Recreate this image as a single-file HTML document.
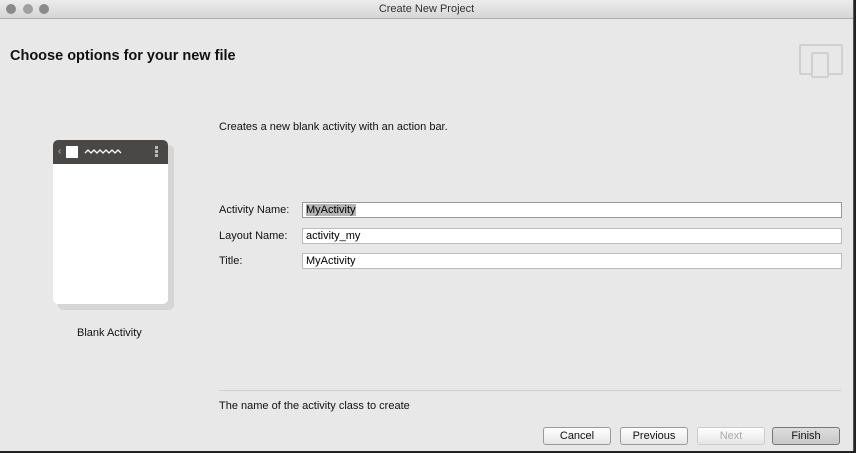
<!DOCTYPE html>
<html><head><style>
body{margin:0;width:856px;height:453px;overflow:hidden;font-family:"Liberation Sans",sans-serif;background:#222}
.win{position:absolute;left:0;top:0;width:853px;height:451px;background:#e8e8e8;border-right:1px solid #555}
.tb{position:absolute;left:0;top:0;width:853px;height:18px;background:linear-gradient(#ececec,#d6d6d6);border-bottom:1px solid #b0b0b0;text-align:center;font-size:11px;line-height:18px;color:#333}
.dot{position:absolute;top:4px;width:10px;height:10px;border-radius:50%;background:#8a8a8a}
.t{position:absolute;font-size:11px;color:#111;white-space:nowrap}
.in{position:absolute;left:302px;width:535px;height:14px;background:#fff;border:1px solid #bbb;font-size:11px;line-height:14px;padding-left:3px;box-sizing:content-box}
.btn{position:absolute;top:427px;height:16px;border:1px solid #999;border-radius:3px;background:linear-gradient(#fff,#e6e6e6);font-size:11px;text-align:center;line-height:16px;color:#111}
</style></head><body>
<div class="win">
<div class="tb">Create New Project</div>
<div class="dot" style="left:6px"></div><div class="dot" style="left:23px;background:#a0a0a0"></div><div class="dot" style="left:39px"></div>
<div class="t" style="left:10px;top:48px;font-size:14.5px;font-weight:bold">Choose options for your new file</div>
<div style="position:absolute;left:799px;top:44px;width:40px;height:27px;border:2px solid #d0d0d0;border-radius:2px"></div>
<div style="position:absolute;left:811px;top:52px;width:14px;height:22px;border:2px solid #d0d0d0;background:#e8e8e8;border-radius:2px"></div>
<div style="position:absolute;left:58px;top:145px;width:116px;height:165px;background:#d6d6d6;border-radius:5px"></div>
<div style="position:absolute;left:53px;top:140px;width:115px;height:164px;background:#fff;border-radius:5px;overflow:hidden">
<div style="height:24px;background:#4a4846"></div>
<div style="position:absolute;left:13px;top:6px;width:12px;height:12px;background:#fff"></div>
<div style="position:absolute;left:5px;top:6px;color:#bbb;font-size:10px">‹</div>
<svg style="position:absolute;left:31px;top:8px" width="40" height="8"><path d="M1 5 L4 2 L7 5 L10 2 L13 5 L16 2 L19 5 L22 2 L25 5 L28 2 L31 5 L34 2 L37 5" stroke="#fff" fill="none" stroke-width="1.3"/></svg>
<div style="position:absolute;left:102px;top:6px;width:3px;height:3px;background:#bbb;box-shadow:0 4px #bbb,0 8px #bbb"></div>
</div>
<div class="t" style="left:77px;top:327px">Blank Activity</div>
<div class="t" style="left:219px;top:121px">Creates a new blank activity with an action bar.</div>
<div class="t" style="left:219px;top:204px">Activity Name:</div>
<div class="t" style="left:219px;top:230px">Layout Name:</div>
<div class="t" style="left:219px;top:255px">Title:</div>
<div class="in" style="top:202px;border-color:#999"><span style="background:#b5b5b5">MyActivity</span></div>
<div class="in" style="top:228px">activity_my</div>
<div class="in" style="top:253px">MyActivity</div>
<div style="position:absolute;left:219px;top:390px;width:622px;height:1px;background:#d0d0d0"></div>
<div class="t" style="left:219px;top:400px">The name of the activity class to create</div>
<div class="btn" style="left:543px;width:66px">Cancel</div>
<div class="btn" style="left:620px;width:66px">Previous</div>
<div class="btn" style="left:697px;width:66px;color:#aaa;border-color:#ccc">Next</div>
<div class="btn" style="left:772px;width:66px;background:linear-gradient(#ddd,#c8c8c8);border-color:#777">Finish</div>
</div>
</body></html>
